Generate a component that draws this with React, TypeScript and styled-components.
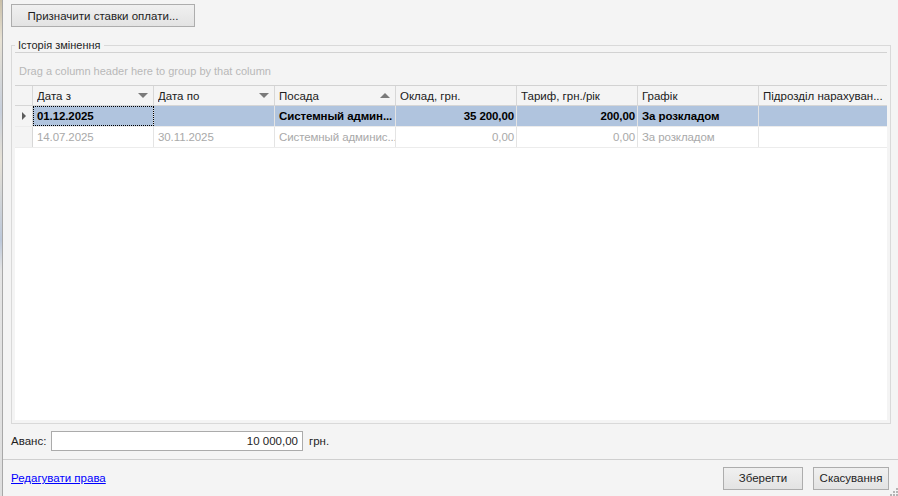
import React from "react";
import styled, { createGlobalStyle } from "styled-components";

// -------------------- Global --------------------
const GlobalStyle = createGlobalStyle`
  html, body {
    margin: 0;
    padding: 0;
    background: #f4f4f4;
  }
  body {
    font-family: "Liberation Sans", Arial, sans-serif;
    font-size: 11.5px;
    color: #1e1e1e;
  }
`;

// -------------------- Dialog shell --------------------
const Window = styled.div`
  width: 898px;
  height: 496px;
  display: flex;
  flex-direction: row;
  overflow: hidden;
  position: relative;
`;

const BehindStrip = styled.div`
  width: 2px;
  flex: none;
  background: linear-gradient(
    to bottom,
    #c9bfa8 0px,
    #e8e2d4 40px,
    #c7cfdc 110px,
    #e6e1d6 160px,
    #bcc8da 240px,
    #e4e4e4 270px,
    #dedede 496px
  );
  border-right: 1px solid #a8a8a8;
`;

const Dialog = styled.div`
  flex: 1;
  display: flex;
  flex-direction: column;
  min-width: 0;
`;

const TopBar = styled.div`
  padding: 4px 0 0 8px;
  height: 23px;
  display: flex;
`;

const Button = styled.button<{ $w: number }>`
  width: ${(p) => p.$w}px;
  height: 23px;
  padding: 0;
  font-family: inherit;
  font-size: 11.5px;
  color: #1e1e1e;
  border: 1px solid #adadad;
  background: linear-gradient(to bottom, #f0f0f0 0%, #e3e3e3 100%);
  cursor: default;
`;

// -------------------- Group box --------------------
const GroupBox = styled.fieldset`
  margin: 12px 7px 0 8px;
  padding: 0 3px 3px 3px;
  border: 1px solid #d9d9d9;
  min-width: 0;
  flex: 1;
  display: flex;
  flex-direction: column;
`;

const Legend = styled.legend`
  padding: 0 3px;
  font-size: 11px;
  line-height: 13px;
  color: #1e1e1e;
`;

const GridControl = styled.div`
  flex: 1;
  display: flex;
  flex-direction: column;
  border-top: 1px solid #d2d2d2;
  min-height: 0;
`;

const GroupPanel = styled.div`
  height: 33px;
  display: flex;
  align-items: center;
  padding: 3px 0 0 4px;
  box-sizing: border-box;
  color: #b8b8b8;
  font-size: 11px;
  border-bottom: 1px solid #d2d2d2;
`;

const COLS = "18px 121px 121px 121px 121px 121px 121px 1fr";

const HeaderRow = styled.div`
  display: grid;
  grid-template-columns: ${COLS};
  height: 20px;
  border-bottom: 1px solid #d6d6d6;
  box-sizing: border-box;
`;

const HeaderCell = styled.div`
  display: flex;
  align-items: center;
  padding: 0 4px;
  border-right: 1px solid #d7d7d7;
  color: #202020;
  white-space: nowrap;
  overflow: hidden;
  &:last-child {
    border-right: none;
  }
`;

const HeaderLabel = styled.span`
  flex: 1;
  overflow: hidden;
`;

const SortGlyph = styled.span<{ $up?: boolean }>`
  width: 0;
  height: 0;
  margin-right: 1px;
  border-left: 5px solid transparent;
  border-right: 5px solid transparent;
  ${(p) =>
    p.$up
      ? "border-bottom: 5px solid #7a7a7a;"
      : "border-top: 5px solid #7a7a7a;"}
`;

const Body = styled.div`
  flex: 1;
  background: #ffffff;
`;

const Row = styled.div<{ $selected?: boolean }>`
  display: grid;
  grid-template-columns: ${COLS};
  height: 21px;
  background: ${(p) => (p.$selected ? "#b0c4de" : "#ffffff")};
  border-bottom: 1px solid #ececec;
  box-sizing: border-box;
  font-weight: ${(p) => (p.$selected ? 700 : 400)};
  color: ${(p) => (p.$selected ? "#000000" : "#a9a9a9")};
`;

const Indicator = styled.div`
  background: #f4f4f4;
  display: flex;
  align-items: center;
  justify-content: center;
  border-right: 1px solid #d7d7d7;
`;

const RowArrow = styled.span`
  width: 0;
  height: 0;
  border-top: 4px solid transparent;
  border-bottom: 4px solid transparent;
  border-left: 4px solid #5c5c5c;
`;

const Cell = styled.div<{ $right?: boolean; $focus?: boolean }>`
  display: flex;
  align-items: center;
  justify-content: ${(p) => (p.$right ? "flex-end" : "flex-start")};
  padding: 0 2px 0 4px;
  letter-spacing: -0.1px;
  white-space: nowrap;
  overflow: hidden;
  border-right: 1px solid #e4e4e4;
  box-sizing: border-box;
  outline: ${(p) => (p.$focus ? "1px dotted #000" : "none")};
  outline-offset: -1px;
  &:last-child {
    border-right: none;
  }
`;

// -------------------- Bottom --------------------
const AdvanceRow = styled.div`
  display: flex;
  align-items: center;
  height: 20px;
  margin: 7px 0 8px 8px;
`;

const AdvanceLabel = styled.span`
  width: 40px;
  color: #1e1e1e;
`;

const AmountInput = styled.div`
  width: 252px;
  height: 20px;
  box-sizing: border-box;
  border: 1px solid #ababab;
  background: #fff;
  display: flex;
  align-items: center;
  justify-content: flex-end;
  padding-right: 4px;
`;

const Unit = styled.span`
  margin-left: 6px;
`;

const Footer = styled.div`
  border-top: 1px solid #cfcfcf;
  flex: none;
  height: 36px;
  display: flex;
  align-items: center;
  padding: 0 9px 0 8px;
  gap: 10px;
`;

const Link = styled.a`
  color: #0000ff;
  text-decoration: underline;
  margin-right: auto;
  cursor: pointer;
`;

const Grip = styled.svg`
  position: absolute;
  right: 0;
  bottom: 0;
`;

// -------------------- Data --------------------
interface HistoryRow {
  from: string;
  to: string;
  position: string;
  salary: string;
  tariff: string;
  schedule: string;
  unit: string;
}

// texts are shown as the grid trims them
const rows: HistoryRow[] = [
  {
    from: "01.12.2025",
    to: "",
    position: "Системный админ...",
    salary: "35 200,00",
    tariff: "200,00",
    schedule: "За розкладом",
    unit: "",
  },
  {
    from: "14.07.2025",
    to: "30.11.2025",
    position: "Системный админис...",
    salary: "0,00",
    tariff: "0,00",
    schedule: "За розкладом",
    unit: "",
  },
];

const App = (): JSX.Element => {
  return (
    <>
      <GlobalStyle />
      <Window>
        <BehindStrip />
        <Dialog>
          <TopBar>
            <Button $w={184}>Призначити ставки оплати...</Button>
          </TopBar>

          <GroupBox>
            <Legend>Історія змінення</Legend>
            <GridControl>
              <GroupPanel>Drag a column header here to group by that column</GroupPanel>
              <HeaderRow>
                <HeaderCell />
                <HeaderCell>
                  <HeaderLabel>Дата з</HeaderLabel>
                  <SortGlyph />
                </HeaderCell>
                <HeaderCell>
                  <HeaderLabel>Дата по</HeaderLabel>
                  <SortGlyph />
                </HeaderCell>
                <HeaderCell>
                  <HeaderLabel>Посада</HeaderLabel>
                  <SortGlyph $up />
                </HeaderCell>
                <HeaderCell>
                  <HeaderLabel>Оклад, грн.</HeaderLabel>
                </HeaderCell>
                <HeaderCell>
                  <HeaderLabel>Тариф, грн./рік</HeaderLabel>
                </HeaderCell>
                <HeaderCell>
                  <HeaderLabel>Графік</HeaderLabel>
                </HeaderCell>
                <HeaderCell>
                  <HeaderLabel>Підрозділ нарахуван...</HeaderLabel>
                </HeaderCell>
              </HeaderRow>
              <Body>
                {rows.map((r, index) => (
                  <Row key={index} $selected={index === 0}>
                    <Indicator>{index === 0 && <RowArrow />}</Indicator>
                    <Cell $focus={index === 0}>{r.from}</Cell>
                    <Cell>{r.to}</Cell>
                    <Cell>{r.position}</Cell>
                    <Cell $right>{r.salary}</Cell>
                    <Cell $right>{r.tariff}</Cell>
                    <Cell>{r.schedule}</Cell>
                    <Cell>{r.unit}</Cell>
                  </Row>
                ))}
              </Body>
            </GridControl>
          </GroupBox>

          <AdvanceRow>
            <AdvanceLabel>Аванс:</AdvanceLabel>
            <AmountInput>10 000,00</AmountInput>
            <Unit>грн.</Unit>
          </AdvanceRow>

          <Footer>
            <Link>Редагувати права</Link>
            <Button $w={80}>Зберегти</Button>
            <Button $w={76}>Скасування</Button>
          </Footer>
        </Dialog>
        <Grip width="9" height="9" viewBox="0 0 9 9">
          {[
            [7, 1], [7, 4], [4, 4], [7, 7], [4, 7], [1, 7],
          ].map(([x, y], i) => (
            <rect key={i} x={x} y={y} width="2" height="2" fill="#b5b5b5" />
          ))}
        </Grip>
      </Window>
    </>
  );
};

export default App;
